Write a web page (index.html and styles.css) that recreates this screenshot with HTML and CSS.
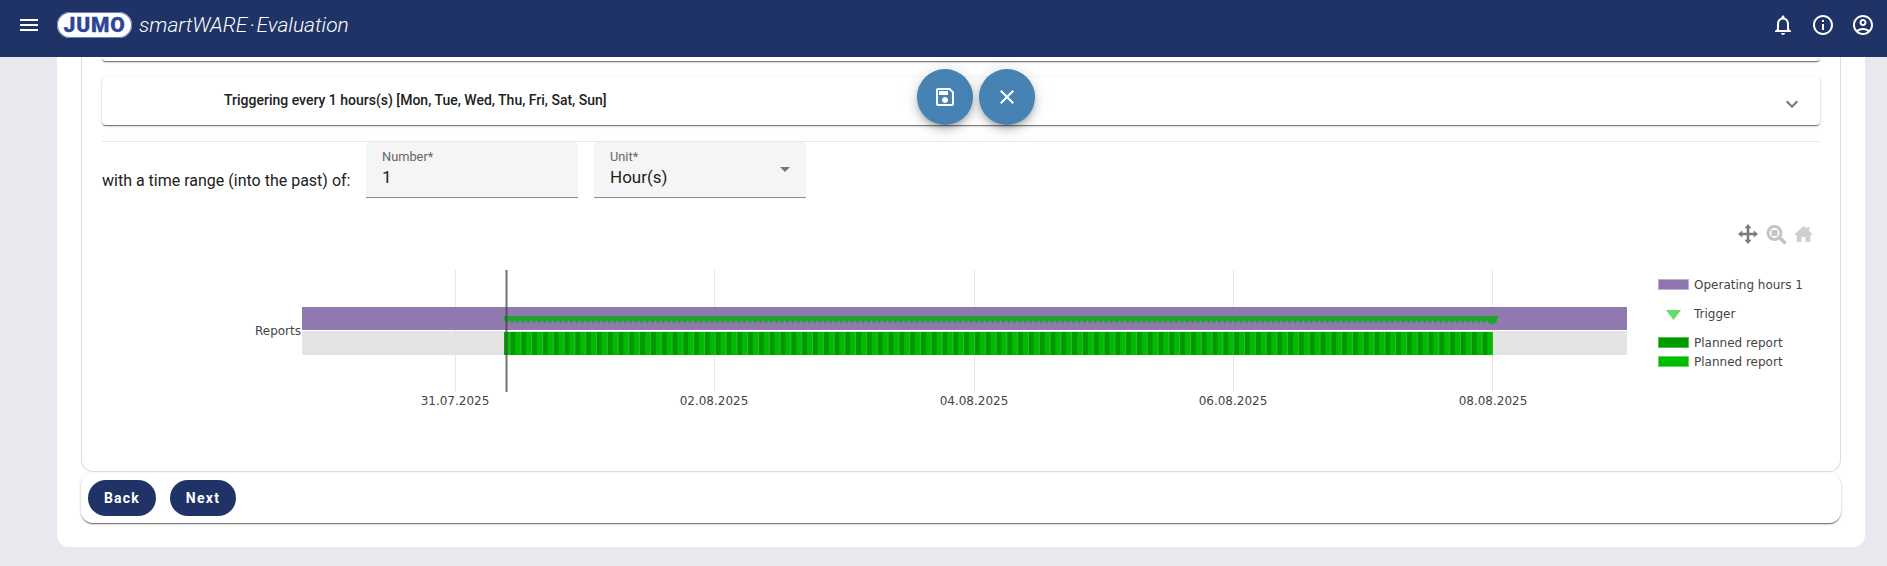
FILE: index.html
```html
<!DOCTYPE html>
<html lang="en">
<head>
<meta charset="utf-8">
<title>JUMO smartWARE Evaluation</title>
<link rel="stylesheet" href="styles.css">
</head>
<body>
<header class="topbar">
  <svg class="menu-icon" viewBox="0 0 24 24" width="24" height="24"><path d="M3 18h18v-2H3v2zm0-5h18v-2H3v2zm0-7v2h18V6H3z"/></svg>
  <div class="logo"><div class="logo-inner">JUMO</div></div>
  <div class="product">smartWARE · Evaluation</div>
  <div class="top-icons">
    <svg viewBox="0 0 24 24" width="24" height="24"><path d="M12 22c1.1 0 2-.9 2-2h-4c0 1.1.9 2 2 2zm6-6v-5c0-3.07-1.63-5.64-4.5-6.32V4c0-.83-.67-1.5-1.5-1.5s-1.5.67-1.5 1.5v.68C7.64 5.36 6 7.92 6 11v5l-2 2v1h16v-1l-2-2zm-2 1H8v-6c0-2.48 1.51-4.5 4-4.5s4 2.02 4 4.5v6z"/></svg>
    <svg viewBox="0 0 24 24" width="24" height="24"><path d="M11 7h2v2h-2zm0 4h2v6h-2zm1-9C6.48 2 2 6.48 2 12s4.48 10 10 10 10-4.48 10-10S17.52 2 12 2zm0 18c-4.41 0-8-3.59-8-8s3.59-8 8-8 8 3.59 8 8-3.59 8-8 8z"/></svg>
    <svg viewBox="0 0 24 24" width="24" height="24"><path d="M12 2C6.48 2 2 6.48 2 12s4.48 10 10 10 10-4.48 10-10S17.52 2 12 2zM7.35 18.5C8.66 17.56 10.26 17 12 17s3.34.56 4.65 1.5c-1.31.94-2.91 1.5-4.65 1.5s-3.34-.56-4.65-1.5zm10.79-1.38C16.45 15.8 14.32 15 12 15s-4.45.8-6.14 2.12C4.7 15.73 4 13.95 4 12c0-4.42 3.58-8 8-8s8 3.58 8 8c0 1.95-.7 3.73-1.86 5.12z"/><path d="M12 6c-1.93 0-3.5 1.57-3.5 3.5S10.07 13 12 13s3.5-1.57 3.5-3.5S13.93 6 12 6zm0 5c-.83 0-1.5-.67-1.5-1.5S11.17 8 12 8s1.5.67 1.5 1.5S12.83 11 12 11z"/></svg>
  </div>
</header>

<div class="fabs">
  <button class="fab" type="button" aria-label="Save">
    <svg viewBox="0 0 24 24" width="24" height="24"><path d="M17 3H5c-1.11 0-2 .9-2 2v14c0 1.1.89 2 2 2h14c1.1 0 2-.9 2-2V7l-4-4zm2 16H5V5h11.17L19 7.83V19zm-7-7c-1.66 0-3 1.34-3 3s1.34 3 3 3 3-1.34 3-3-1.34-3-3-3zM6 6h9v4H6z"/></svg>
  </button>
  <button class="fab" type="button" aria-label="Close">
    <svg viewBox="0 0 24 24" width="24" height="24"><path d="M19 6.41 17.59 5 12 10.59 6.41 5 5 6.41 10.59 12 5 17.59 6.41 19 12 13.41 17.59 19 19 17.59 13.41 12z"/></svg>
  </button>
</div>

<main class="page">
  <section class="panel">
    <div class="step-box">
      <div class="card card-clipped"></div>
      <div class="card card-trigger">
        <span class="trigger-text">Triggering every 1 hours(s) [Mon, Tue, Wed, Thu, Fri, Sat, Sun]</span>
        <svg class="chevron" viewBox="0 0 24 24" width="24" height="24"><path d="M7.41 8.59 12 13.17l4.59-4.58L18 10l-6 6-6-6z"/></svg>
      </div>
      <hr class="divider">
      <div class="range-row">
        <span class="range-label">with a time range (into the past) of:</span>
        <div class="field">
          <span class="field-label">Number*</span>
          <span class="field-value">1</span>
        </div>
        <div class="field">
          <span class="field-label">Unit*</span>
          <span class="field-value">Hour(s)</span>
          <span class="select-arrow"></span>
        </div>
      </div>
      <svg class="chart" viewBox="102 198 1718 274" width="1718" height="274">
        <defs>
          <pattern id="stripes" patternUnits="userSpaceOnUse" x="504.6" y="0" width="10.8" height="40">
            <rect x="0" y="0" width="5.4" height="40" fill="#00bb00"/>
            <rect x="5.4" y="0" width="5.4" height="40" fill="#009900"/>
          </pattern>
          <pattern id="teeth" patternUnits="userSpaceOnUse" x="504" y="316" width="5.4" height="8">
            <polygon points="0,0 5.4,0 5.4,4 2.7,8 0,4" fill="#1fa52c"/>
          </pattern>
        </defs>
        <g class="grid">
          <line x1="455.5" y1="270" x2="455.5" y2="392"/>
          <line x1="714.5" y1="270" x2="714.5" y2="392"/>
          <line x1="974.5" y1="270" x2="974.5" y2="392"/>
          <line x1="1233.5" y1="270" x2="1233.5" y2="392"/>
          <line x1="1492.5" y1="270" x2="1492.5" y2="392"/>
        </g>
        <rect class="bar-purple" x="302" y="307" width="1325" height="23"/>
        <rect class="bar-grey" x="302" y="331" width="1325" height="24"/>
        <rect x="504" y="332" width="989" height="23" fill="url(#stripes)"/>
        <rect x="504" y="316" width="993" height="8" fill="url(#teeth)"/>
        <polygon points="503,316 508,316 506,322" fill="#1fa52c"/>
        <polygon points="1490,316 1499,316 1494,324 1490,324" fill="#1fa52c"/>
        <rect class="cursor" x="505.5" y="270" width="2" height="122"/>
        <text class="chart-text" x="301" y="335" text-anchor="end">Reports</text>
        <text class="chart-text" x="455" y="405" text-anchor="middle">31.07.2025</text>
        <text class="chart-text" x="714" y="405" text-anchor="middle">02.08.2025</text>
        <text class="chart-text" x="974" y="405" text-anchor="middle">04.08.2025</text>
        <text class="chart-text" x="1233" y="405" text-anchor="middle">06.08.2025</text>
        <text class="chart-text" x="1493" y="405" text-anchor="middle">08.08.2025</text>

        <rect x="1658.5" y="279.5" width="30" height="10" fill="#8e75b0" stroke="#bfaed4"/>
        <text class="chart-text" x="1694" y="289">Operating hours 1</text>
        <polygon points="1666,310 1681,310 1673.5,320" fill="#66dd66"/>
        <text class="chart-text" x="1694" y="318">Trigger</text>
        <rect x="1658.5" y="337.5" width="30" height="10" fill="#009900" stroke="#4fc44f"/>
        <text class="chart-text" x="1694" y="347">Planned report</text>
        <rect x="1658.5" y="356.5" width="30" height="10" fill="#00bb00" stroke="#5fdc5f"/>
        <text class="chart-text" x="1694" y="366">Planned report</text>

        <g class="tool-move">
          <path d="M1748 224l3.500 4.200h-2.200v4.500h4.500v-2.200l4.200 3.500-4.200 3.500v-2.200h-4.500v4.500h2.200l-3.500 4.200-3.500-4.200h2.200v-4.500h-4.500v2.200l-4.200-3.500 4.200-3.500v2.200h4.500v-4.500h-2.200z"/>
        </g>
        <g class="tool-zoom">
          <circle cx="1774.500" cy="233" r="6.500" fill="none" stroke-width="3"/>
          <rect x="1771.500" y="230" width="6" height="6"/>
          <line x1="1780" y1="238" x2="1785.500" y2="243.500" stroke-width="3.500"/>
        </g>
        <g class="tool-home">
          <path d="M1803.500 226l-8.800 8 1 1.200 1-.800V242h4.700v-5h4.200v5h4.700v-7.600l1 .800 1-1.200-3-2.800V227h-2v1.500z"/>
        </g>
      </svg>
    </div>
    <div class="actions">
      <button class="action-btn btn-back" type="button">Back</button>
      <button class="action-btn btn-next" type="button">Next</button>
    </div>
  </section>
</main>
</body>
</html>
```

FILE: styles.css
```css
* { box-sizing: border-box; }
html, body { margin: 0; padding: 0; }
body {
  width: 1887px;
  height: 566px;
  overflow: hidden;
  background: #e8e9ef;
  font-family: Roboto, "Liberation Sans", sans-serif;
  color: #212121;
}
.topbar {
  height: 57px;
  background: #203366;
  display: flex;
  align-items: center;
  padding: 0 12px 0 17px;
  color: #fff;
  position: relative;
  z-index: 2;
}
.topbar svg { fill: #fff; display: block; }
.menu-icon { flex: none; transform: translateY(-4px); }
.logo {
  margin-left: 16px;
  width: 75px;
  height: 26px;
  margin-top: -7px;
  border-radius: 13px;
  background: #fff;
  padding: 1px;
  box-shadow: inset 0 0 0 1px #6f80b8;
  display: flex;
}
.logo-inner {
  flex: 1;
  border-radius: 12px;
  text-align: center;
  font-family: Roboto, sans-serif;
  font-weight: 900;
  font-size: 21px;
  line-height: 24px;
  letter-spacing: .8px;
  color: #2f4696;
  -webkit-text-stroke: .3px #2f4696;
}
.product {
  margin-left: 7px;
  margin-top: -7px;
  font-style: italic;
  font-weight: 300;
  font-size: 21px;
  word-spacing: -3px;
  white-space: nowrap;
  color: #fff;
}
.top-icons {
  margin-left: auto;
  display: flex;
  gap: 16px;
  margin-top: -7px;
}
.fabs {
  position: absolute;
  top: 69px;
  left: 917px;
  display: flex;
  gap: 6px;
  z-index: 3;
}
.fab {
  width: 56px;
  height: 56px;
  border: 0;
  border-radius: 50%;
  background: #4682b4;
  padding: 0;
  display: flex;
  align-items: center;
  justify-content: center;
  box-shadow: 0 3px 5px -1px rgba(0,0,0,.2), 0 6px 10px rgba(0,0,0,.14), 0 1px 18px rgba(0,0,0,.12);
}
.fab svg { fill: #fff; display: block; }
.page { padding: 0 22px 0 57px; }
.panel {
  height: 490px;
  background: #fff;
  border-radius: 0 0 12px 12px;
  padding: 0 24px;
}
.step-box {
  height: 415px;
  border: 1px solid #ddd;
  border-top: 0;
  border-radius: 0 0 12px 12px;
  padding: 0 20px;
}
.card {
  background: #fff;
  box-shadow: 0 2px 1px -1px rgba(0,0,0,.3), 0 1px 1px rgba(0,0,0,.24), 0 1px 3px rgba(0,0,0,.2);
}
.card-clipped {
  height: 4px;
  border-radius: 0 0 4px 4px;
}
.card-trigger {
  margin-top: 16px;
  height: 48px;
  border-radius: 4px;
  display: flex;
  align-items: center;
  padding: 0 16px 0 122px;
}
.trigger-text {
  font-size: 14px;
  font-weight: 500;
  color: #212121;
  white-space: nowrap;
  transform: translateY(-1px);
}
.chevron {
  margin-left: auto;
  fill: #757575;
  display: block;
  transform: translateY(3px);
}
.divider {
  border: 0;
  height: 1px;
  background: #e8e8e8;
  margin: 16px 0 0;
}
.range-row {
  display: flex;
  gap: 16px;
  height: 56px;
  align-items: flex-end;
}
.range-label {
  width: 248px;
  font-size: 16px;
  line-height: 20px;
  padding-bottom: 7px;
  white-space: nowrap;
  color: #212121;
}
.field {
  position: relative;
  width: 212px;
  height: 56px;
  background: #f5f5f5;
  border-radius: 4px 4px 0 0;
  border-bottom: 1px solid #8c8c8c;
  padding: 7px 16px 0;
  display: flex;
  flex-direction: column;
}
.field-label {
  font-size: 12.8px;
  line-height: 16px;
  color: #666;
}
.field-value {
  font-size: 17px;
  line-height: 24px;
  color: #212121;
}
.select-arrow {
  position: absolute;
  right: 16px;
  top: 25px;
  width: 0;
  height: 0;
  border-left: 5px solid transparent;
  border-right: 5px solid transparent;
  border-top: 5px solid #757575;
}
.chart { display: block; }
.bar-purple { fill: #8a72aa; fill-opacity: .95; }
.bar-grey { fill: #e3e3e3; fill-opacity: .95; }
.grid line { stroke: #e6e6e6; stroke-width: 1; }
.cursor { fill: #444; fill-opacity: .75; }
.chart-text {
  font-family: "DejaVu Sans", Verdana, sans-serif;
  font-size: 12px;
  fill: #444;
}
.tool-move path { fill: #7a7a7a; }
.tool-zoom circle, .tool-zoom line { stroke: #c4c4c4; }
.tool-zoom rect { fill: #c4c4c4; }
.tool-home path { fill: #cfcfcf; }
.actions {
  height: 50px;
  margin: 1px 0 0;
  background: #fff;
  border-radius: 12px;
  display: flex;
  align-items: center;
  gap: 14px;
  padding: 0 7px;
  box-shadow: 0 2px 1px -1px rgba(0,0,0,.3), 0 1px 1px rgba(0,0,0,.24), 0 1px 3px rgba(0,0,0,.2);
}
.action-btn {
  height: 36px;
  border: 0;
  border-radius: 18px;
  background: #203366;
  color: #fff;
  font-family: Roboto, sans-serif;
  font-size: 14px;
  font-weight: 700;
  letter-spacing: 1.25px;
  padding: 0;
}
.btn-back { width: 68px; }
.btn-next { width: 66px; }
```
